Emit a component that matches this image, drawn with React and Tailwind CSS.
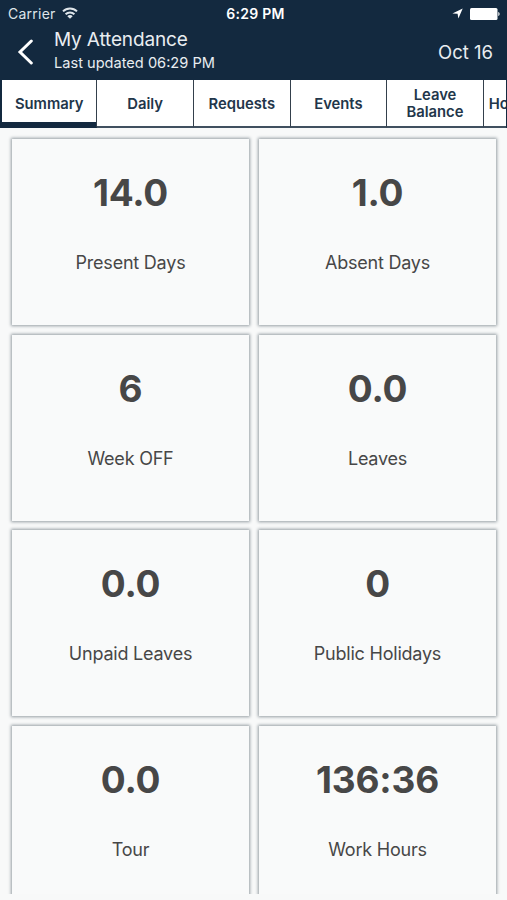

import { useState } from 'react';

const TABS = ['Summary', 'Daily', 'Requests', 'Events', 'Leave Balance', 'Holidays'];

const STATS = [
  { value: '14.0', label: 'Present Days' },
  { value: '1.0', label: 'Absent Days' },
  { value: '6', label: 'Week OFF' },
  { value: '0.0', label: 'Leaves' },
  { value: '0.0', label: 'Unpaid Leaves' },
  { value: '0', label: 'Public Holidays' },
  { value: '0.0', label: 'Tour' },
  { value: '136:36', label: 'Work Hours' },
];

function WifiIcon() {
  return (
    <svg className="w-4 h-3 -mt-px" viewBox="0 0 16 12" fill="none" stroke="currentColor" strokeWidth="2">
      <path d="M1 4.4a10 10 0 0 1 14 0" />
      <path d="M3.6 7.2a6.3 6.3 0 0 1 8.8 0" />
      <path d="M8 11.8 5.3 9.2a3.7 3.7 0 0 1 5.4 0z" fill="currentColor" stroke="none" />
    </svg>
  );
}

function StatusBar() {
  return (
    <div className="grid grid-cols-3 items-center h-[27px] pl-2 pr-[7px]">
      <div className="flex items-center gap-[6px] text-[14px] tracking-[0.25px] text-[#dfe5ea]">
        <span>Carrier</span>
        <WifiIcon />
      </div>
      <div className="text-center text-[14px] font-semibold tracking-[0.3px] whitespace-nowrap pl-[3px]">6:29 PM</div>
      <div className="flex items-center justify-end gap-[7px]">
        <svg className="w-[11px] h-[11px]" viewBox="0 0 11 11" fill="currentColor">
          <path d="M10.7.4 6.4 10.6 5.6 5.8.4 5.4z" />
        </svg>
        <svg className="w-[30px] h-3" viewBox="0 0 30 12" fill="currentColor">
          <rect x="0" y="0" width="27.5" height="12" rx="1.5" />
          <path d="M28.3 4c1.7.3 1.7 3.7 0 4z" />
        </svg>
      </div>
    </div>
  );
}

function Header() {
  return (
    <div className="flex items-center h-[53px] pl-[17px] pr-[14px]">
      <svg className="w-4 h-[26px] flex-shrink-0 -mt-[3px]" viewBox="0 0 16 26" fill="none" stroke="currentColor" strokeWidth="3" strokeLinecap="round">
        <path d="M14.3 2 3 13l11.3 11" />
      </svg>
      <div className="flex-1 pl-[21px] text-[#e9edf1]">
        <h1 className="text-[19px] leading-6 -mt-[5px] tracking-[-0.15px]">My Attendance</h1>
        <p className="text-[14.6px] leading-[23px]">Last updated 06:29 PM</p>
      </div>
      <div className="text-[18.5px] text-[#e9edf1] -mt-px">Oct 16</div>
    </div>
  );
}

function StatCard({ value, label }) {
  return (
    <div className="h-[186px] bg-[#f9fafa] shadow-[0_0_3px_1px_#959ea3] text-center text-[#474747]">
      <div className="pt-[31px] text-[37px] leading-[45px] font-bold tracking-[-0.2px]">{value}</div>
      <div className="pt-[36px] text-[18px] leading-6 tracking-[-0.22px]">{label}</div>
    </div>
  );
}

export default function App() {
  const [active, setActive] = useState('Summary');

  return (
    <div className="w-[507px] h-[900px] overflow-hidden flex flex-col bg-[#f8f9f9] font-['Inter',sans-serif]">
      <header className="bg-[#13293f] text-white flex-shrink-0">
        <StatusBar />
        <Header />
      </header>

      {/* Tabs */}
      <nav className="flex h-12 flex-shrink-0 overflow-hidden border-l-2 border-r border-x-[#13293f] bg-white">
        {TABS.map((tab) => (
          <button
            key={tab}
            onClick={() => setActive(tab)}
            className={`w-[96.6px] first:w-[95.4px] flex-shrink-0 border-r-[1.5px] border-b-2 border-r-[#34404c] text-[14.8px] leading-[17px] pt-[2px] font-semibold text-[#22364a] ${
              active === tab ? 'border-b-[#13293f] shadow-[inset_0_-4px_0_#13293f]' : 'border-b-[#40505f]'
            } ${tab === 'Holidays' ? 'text-left pl-[5px]' : 'px-2'}`}
          >
            {tab}
          </button>
        ))}
      </nav>

      {/* Stat cards */}
      <main className="h-[766px] overflow-hidden">
        <div className="grid grid-cols-2 gap-x-[10px] gap-y-[9.5px] pt-[11px] pl-3 pr-[11px]">
          {STATS.map((stat) => (
            <StatCard key={stat.label} value={stat.value} label={stat.label} />
          ))}
        </div>
      </main>
    </div>
  );
}
